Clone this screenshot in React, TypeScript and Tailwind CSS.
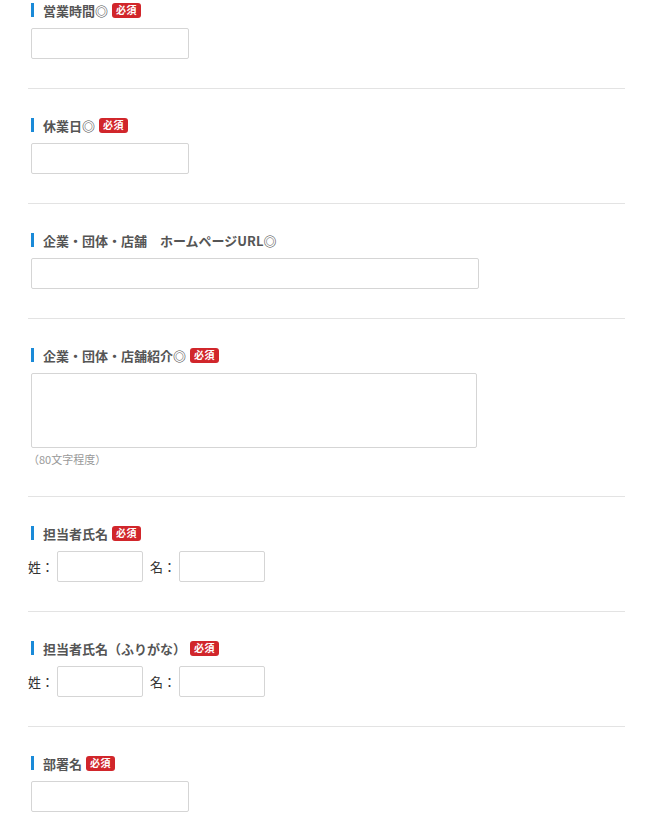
import React from 'react';

const Required = () => (
  <span className="ml-[4px] inline-flex h-[15px] items-center rounded-[3px] bg-[#d1262b] px-[4px] text-[10px] font-bold leading-none tracking-[0.5px] text-white">
    必須
  </span>
);

const Label: React.FC<{ text: string; required?: boolean }> = ({ text, required }) => (
  <div className="flex h-[20px] items-center pl-[3px]">
    <span className="mr-[9px] h-[14px] w-[3px] bg-[#1a8ad8]" />
    <span className="text-[13px] font-bold leading-none text-[#555]">{text}</span>
    {required && <Required />}
  </div>
);

const inputCls = 'h-[31px] rounded-[2px] border border-[#d5d5d5] bg-white';

const Section: React.FC<{ last?: boolean; children: React.ReactNode }> = ({ last, children }) => (
  <div className={`pt-[26px] pb-[29px] ${last ? '' : 'border-b border-[#e3e3e3]'}`}>{children}</div>
);

const NameRow = () => (
  <div className="mt-[8px] flex items-center text-[13px] text-[#333]">
    <span className="w-[29px]">姓：</span>
    <div className={`${inputCls} w-[86px]`} />
    <span className="ml-[7px] w-[29px]">名：</span>
    <div className={`${inputCls} w-[86px]`} />
  </div>
);

export default function App() {
  return (
    <div
      className="min-h-screen bg-white px-[25px] pl-[28px]"
      style={{ fontFamily: '"Noto Sans CJK JP", "Noto Sans", sans-serif' }}
    >
      <div className="-mt-[26px]">
        <Section>
          <Label text="営業時間◎" required />
          <div className={`${inputCls} ml-[3px] mt-[8px] w-[158px]`} />
        </Section>
        <Section>
          <Label text="休業日◎" required />
          <div className={`${inputCls} ml-[3px] mt-[8px] w-[158px]`} />
        </Section>
        <Section>
          <Label text="企業・団体・店舗　ホームページURL◎" />
          <div className={`${inputCls} ml-[3px] mt-[8px] w-[448px]`} />
        </Section>
        <Section>
          <Label text="企業・団体・店舗紹介◎" required />
          <div className="ml-[3px] mt-[8px] h-[75px] w-[446px] rounded-[2px] border border-[#d5d5d5] bg-white" />
          <div className="mt-[3px] text-[11px] leading-[16px] text-[#999]">（80文字程度）</div>
        </Section>
        <Section>
          <Label text="担当者氏名" required />
          <NameRow />
        </Section>
        <Section>
          <Label text="担当者氏名（ふりがな）" required />
          <NameRow />
        </Section>
        <Section last>
          <Label text="部署名" required />
          <div className={`${inputCls} ml-[3px] mt-[8px] w-[158px]`} />
        </Section>
      </div>
    </div>
  );
}
